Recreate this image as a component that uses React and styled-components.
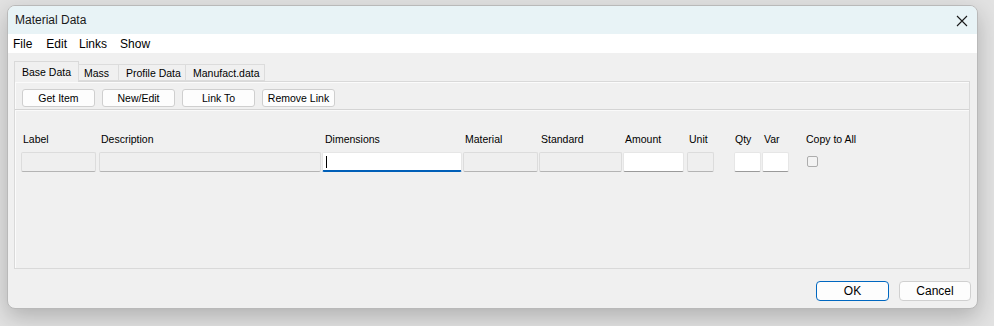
import React from 'react';
import styled, { createGlobalStyle } from 'styled-components';

const GlobalStyle = createGlobalStyle`
  html, body {
    margin: 0;
    padding: 0;
    background: #e2e2e2;
    font-family: "Liberation Sans", Arial, sans-serif;
  }
`;

const Page = styled.div`
  width: 994px;
  height: 326px;
  padding: 5px 0 0 7px;
  box-sizing: border-box;
  overflow: hidden;
`;

const Window = styled.div`
  width: 971px;
  height: 304px;
  box-sizing: border-box;
  border: 1px solid #b9b9b9;
  border-radius: 8px;
  overflow: hidden;
  background: #f0f0f0;
  display: flex;
  flex-direction: column;
  box-shadow: 0 8px 22px rgba(0, 0, 0, 0.22);
`;

const TitleBar = styled.div`
  height: 28px;
  background: #e8f3f6;
  display: flex;
  align-items: center;
  justify-content: space-between;
  padding: 0 9px 0 7px;
  font-size: 12px;
  color: #1a1a1a;
`;

const CloseButton = styled.div`
  width: 12px;
  height: 12px;
  display: flex;
  margin-top: 1px;
`;

const MenuBar = styled.div`
  height: 19px;
  background: #ffffff;
  display: flex;
  align-items: center;
  padding-left: 5px;
`;

const MenuItem = styled.span`
  font-size: 12px;
  color: #000;
  margin-right: ${(p) => p.$gap}px;
`;

const Body = styled.div`
  flex: 1;
  padding: 8px 7px 0 6px;
  display: flex;
  flex-direction: column;
`;

const TabStrip = styled.div`
  display: flex;
  align-items: flex-end;
  height: 20px;
  position: relative;
  z-index: 1;
`;

const Tab = styled.div`
  width: ${(p) => p.$w}px;
  box-sizing: border-box;
  height: ${(p) => (p.$active ? 21 : 17)}px;
  margin-bottom: ${(p) => (p.$active ? -1 : 0)}px;
  padding-left: ${(p) => p.$pad}px;
  display: flex;
  align-items: center;
  font-size: 10.5px;
  color: #000;
  background: #f0f0f0;
  border: 1px solid ${(p) => (p.$active ? '#d9d9d9' : '#dcdcdc')};
  border-bottom: ${(p) => (p.$active ? 'none' : '1px solid #dcdcdc')};
  margin-left: ${(p) => (p.$first ? 0 : -1)}px;
`;

const Panel = styled.div`
  height: 188px;
  box-sizing: border-box;
  border: 1px solid #d9d9d9;
  box-shadow: inset 1px 1px 0 #fbfbfb;
  display: flex;
  flex-direction: column;
  padding-top: 7px;
`;

const ButtonRow = styled.div`
  display: flex;
  gap: 7px;
  padding-left: 7px;
  height: 18px;
`;

const SmallButton = styled.button`
  width: 73px;
  height: 18px;
  box-sizing: border-box;
  border: 1px solid #cfcfcf;
  border-radius: 3px;
  background: #fdfdfd;
  font-family: inherit;
  font-size: 10.5px;
  color: #000;
  padding: 0;
`;

const Separator = styled.div`
  margin-top: 2px;
  height: 1px;
  background: #d4d4d4;
  border-bottom: 1px solid #fafafa;
`;

const FieldRow = styled.div`
  display: flex;
  align-items: flex-start;
  padding-left: 6px;
  margin-top: 22px;
`;

const Column = styled.div`
  display: flex;
  flex-direction: column;
  width: ${(p) => p.$w}px;
  margin-left: ${(p) => p.$ml}px;
`;

const FieldLabel = styled.div`
  font-size: 10.5px;
  color: #000;
  height: 13px;
  line-height: 13px;
  padding-left: ${(p) => p.$pl}px;
  white-space: nowrap;
`;

const Input = styled.div`
  margin-top: 6px;
  height: 20px;
  box-sizing: border-box;
  border: 1px solid ${(p) => (p.$white ? '#e6e6e6' : '#dcdcdc')};
  border-bottom: ${(p) =>
    p.$focus ? '2px solid #005fb8' : `1px solid ${p.$white ? '#9a9a9a' : '#b4b4b4'}`};
  border-radius: 2px;
  background: ${(p) => (p.$white ? '#ffffff' : '#efefef')};
  display: flex;
  align-items: center;
  padding-left: 3px;
`;

const Caret = styled.span`
  width: 1px;
  height: 12px;
  background: #000;
`;

const Checkbox = styled.div`
  margin-top: 10px;
  margin-left: 1px;
  width: 11px;
  height: 11px;
  box-sizing: border-box;
  border: 1px solid #adadad;
  border-radius: 2px;
  background: #f3f3f3;
`;

const Footer = styled.div`
  display: flex;
  justify-content: flex-end;
  gap: 10px;
  margin-top: 12px;
  margin-right: -1px;
`;

const DialogButton = styled.button`
  width: ${(p) => p.$w}px;
  height: 20px;
  box-sizing: border-box;
  border: 1px solid ${(p) => (p.$primary ? '#0067c0' : '#d0d0d0')};
  border-radius: 4px;
  background: #fdfdfd;
  font-family: inherit;
  font-size: 12px;
  color: #000;
  padding: 0;
`;

const tabs = [
  { name: 'Base Data', w: 65, pad: 7, active: true },
  { name: 'Mass', w: 41, pad: 5 },
  { name: 'Profile Data', w: 68, pad: 7 },
  { name: 'Manufact.data', w: 80, pad: 7 },
];

const fields = [
  { label: 'Label', w: 75, ml: 0, pl: 2 },
  { label: 'Description', w: 222, ml: 3, pl: 2 },
  { label: 'Dimensions', w: 140, ml: 1, pl: 3, white: true, focus: true },
  { label: 'Material', w: 75, ml: 1, pl: 2 },
  { label: 'Standard', w: 83, ml: 1, pl: 2 },
  { label: 'Amount', w: 61, ml: 1, pl: 2, white: true },
  { label: 'Unit', w: 27, ml: 3, pl: 2 },
  { label: 'Qty', w: 27, ml: 20, pl: 1, white: true },
  { label: 'Var', w: 27, ml: 1, pl: 2, white: true },
];

export default function App() {
  return (
    <Page>
      <GlobalStyle />
      <Window>
        <TitleBar>
          <span>Material Data</span>
          <CloseButton>
            <svg width="12" height="12" viewBox="0 0 12 12">
              <path d="M1 1 L11 11 M11 1 L1 11" stroke="#1a1a1a" strokeWidth="1.1" />
            </svg>
          </CloseButton>
        </TitleBar>
        <MenuBar>
          <MenuItem $gap={14}>File</MenuItem>
          <MenuItem $gap={12}>Edit</MenuItem>
          <MenuItem $gap={13}>Links</MenuItem>
          <MenuItem $gap={0}>Show</MenuItem>
        </MenuBar>
        <Body>
          <TabStrip>
            {tabs.map((t, i) => (
              <Tab key={t.name} $w={t.w} $pad={t.pad} $active={t.active} $first={i === 0}>
                {t.name}
              </Tab>
            ))}
          </TabStrip>
          <Panel>
            <ButtonRow>
              <SmallButton>Get Item</SmallButton>
              <SmallButton>New/Edit</SmallButton>
              <SmallButton>Link To</SmallButton>
              <SmallButton>Remove Link</SmallButton>
            </ButtonRow>
            <Separator />
            <FieldRow>
              {fields.map((f) => (
                <Column key={f.label} $w={f.w} $ml={f.ml}>
                  <FieldLabel $pl={f.pl}>{f.label}</FieldLabel>
                  <Input $white={f.white} $focus={f.focus}>
                    {f.focus && <Caret />}
                  </Input>
                </Column>
              ))}
              <Column $w={60} $ml={17}>
                <FieldLabel $pl={0}>Copy to All</FieldLabel>
                <Checkbox />
              </Column>
            </FieldRow>
          </Panel>
          <Footer>
            <DialogButton $w={73} $primary>OK</DialogButton>
            <DialogButton $w={72}>Cancel</DialogButton>
          </Footer>
        </Body>
      </Window>
    </Page>
  );
}
